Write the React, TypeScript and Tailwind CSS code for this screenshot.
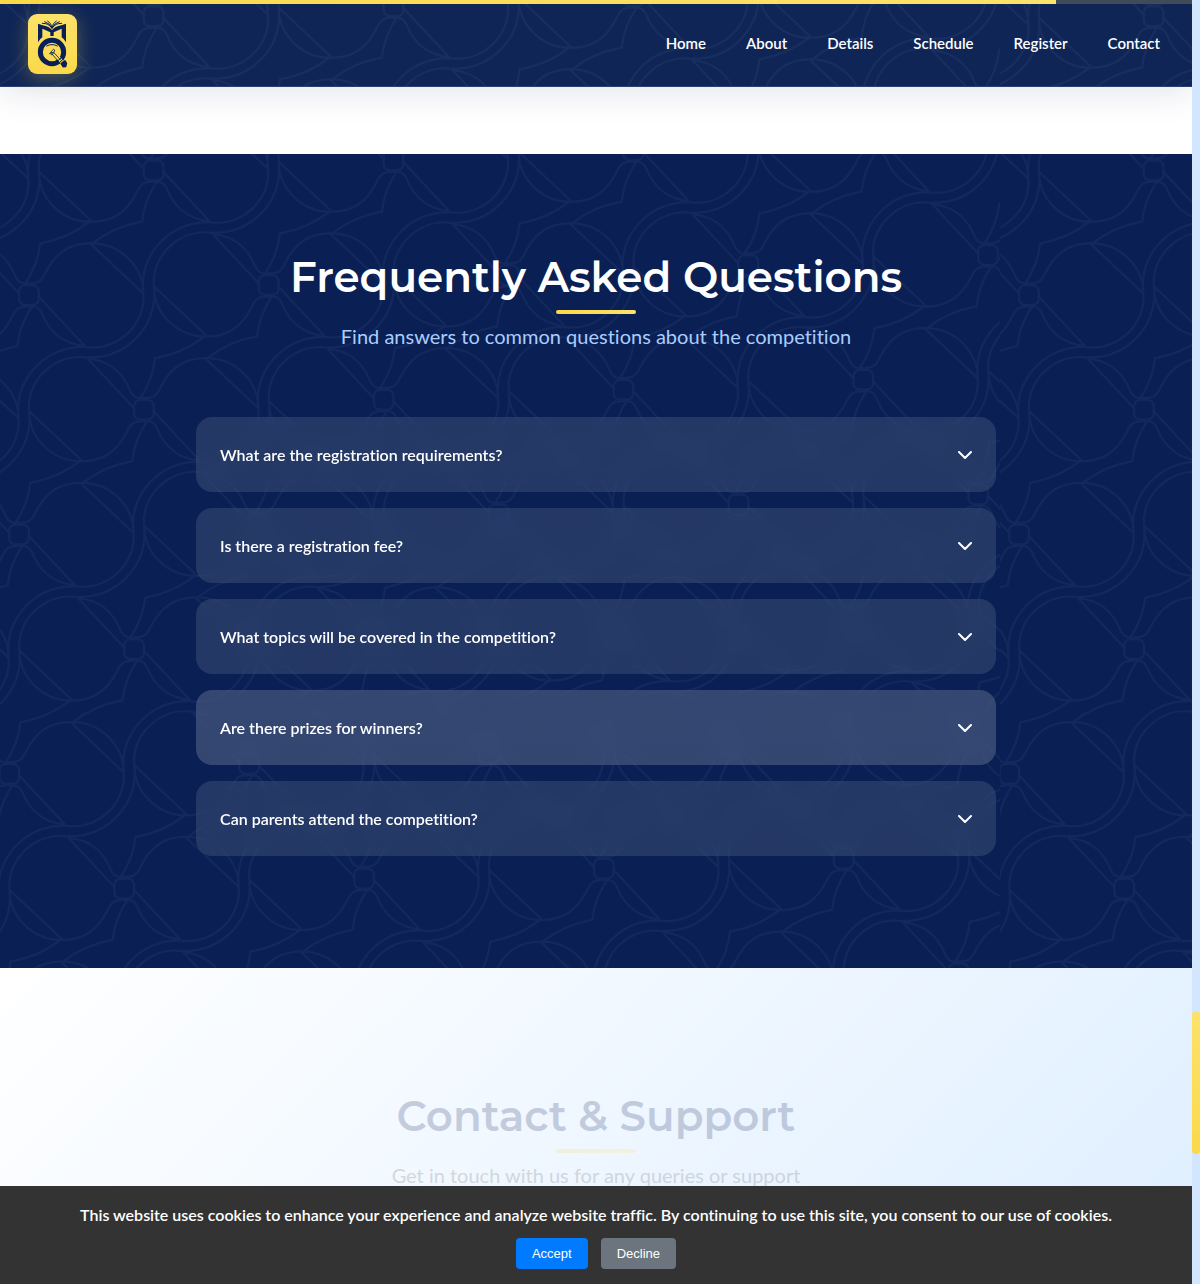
import React, { useId } from "react";

const NAV = ["Home", "About", "Details", "Schedule", "Register", "Contact"];

const QUESTIONS = [
  { text: "What are the registration requirements?", active: false },
  { text: "Is there a registration fee?", active: false },
  { text: "What topics will be covered in the competition?", active: false },
  { text: "Are there prizes for winners?", active: true },
  { text: "Can parents attend the competition?", active: false },
];

/* Knot centres of the woven lattice inside one 1000px wide tile. */
const KNOTS: Array<[number, number]> = [];
for (let i = -10; i <= 14; i++) {
  for (let j = -10; j <= 14; j++) {
    const x = 153.5 + i * 115 - j * 124.8;
    const y = 16.2 + i * 114.7 + j * 124.7;
    if (x > -220 && x < 1220 && y > -150 && y < 1200) KNOTS.push([x, y]);
  }
}

const HALF_MOTIF =
  "M28 3L168 153M187 -152L344 -4M-13 -30Q28 -90 34 -154Q120 -170 182 -219" +
  "M-168 -153C-90 -145 -58 -100 -40 -56C-28 -28 -5 -35 6 -35C28 -35 38 -40 50 -66C80 -125 120 -155 187 -155C280 -155 344 -80 344 -4" +
  "M170 156C265 170 350 90 344 0C330 -120 420 -220 544 -218";

function PatternLayer({ stroke }: { stroke: string }) {
  const id = useId();
  return (
    <svg aria-hidden="true" className="pointer-events-none absolute inset-0 h-full w-full">
      <defs>
        <g id={`${id}m`} transform="scale(0.3333)">
          <rect x="-29" y="-29" width="59" height="59" rx="18" />
          <path d={HALF_MOTIF} />
          <path d={HALF_MOTIF} transform="rotate(180)" />
        </g>
        <pattern id={`${id}p`} width="1000" height="1000" patternUnits="userSpaceOnUse">
          <g fill="none" stroke={stroke} strokeWidth="6">
            {KNOTS.map(([x, y]) => (
              <use key={`${x},${y}`} href={`#${id}m`} x={x} y={y} />
            ))}
          </g>
        </pattern>
      </defs>
      <rect width="100%" height="100%" fill={`url(#${id}p)`} />
    </svg>
  );
}

function Logo() {
  return (
    <svg viewBox="84 42 147 180" className="h-full w-full" role="img" aria-label="Quiz logo">
      <path fill="#0a2054" d="M114 71L128 76Q148 80 156 90Q164 80 184 76L198 71V127Q193 117 185 112V86L161 97V108H151V97L127 86V112Q119 117 114 127Z" />
      <circle cx="156" cy="156" r="35" fill="none" stroke="#0a2054" strokeWidth="15" />
      <path d="M168 166L186 186" stroke="#fbdc53" strokeWidth="11" />
      <g fill="none" stroke="#0a2054" strokeLinecap="round">
        <path strokeWidth="3" d="M127 70Q146 69 155 84M134 65Q149 69 156 84M143 63Q154 69 156 82M185 70Q166 69 157 84M178 65Q163 69 156 84M169 63Q158 69 156 82" />
        <path strokeWidth="3" d="M140 138Q156 129 172 138" />
        <path strokeWidth="2.5" d="M161 157L182 180M156 162L177 186M148 161q4-6 10-3t-3 7q-7-3 0-12t9-3-8 10" />
        <path strokeWidth="3" d="M174 182l9-8M179 187l9-8" />
        <path strokeWidth="5" strokeLinejoin="round" fill="#0a2054" d="M184 191l11-8 4 7-2 9-7 1z" />
      </g>
    </svg>
  );
}

function Chevron() {
  return (
    <svg width="14" height="8" viewBox="0 0 14 8" fill="none" stroke="currentColor" strokeWidth="2" strokeLinecap="round" strokeLinejoin="round" aria-hidden="true">
      <path d="M1 1l6 6 6-6" />
    </svg>
  );
}

function SectionTitle({ title, subtitle, titleClass, subtitleClass }: { title: string; subtitle: string; titleClass: string; subtitleClass: string }) {
  return (
    <div className="flex flex-col items-center text-center">
      <h2 className={`font-[Montserrat,Inter,sans-serif] text-[42px] leading-[54px] font-semibold ${titleClass}`}>{title}</h2>
      <div className="mt-1.5 h-1 w-20 rounded-sm bg-linear-to-r from-[#fad948] to-[#fde26b]" />
      <p className={`mt-1.5 text-xl leading-8 ${subtitleClass}`}>{subtitle}</p>
    </div>
  );
}

export default function App() {
  return (
    <div className="flex h-screen bg-white font-[Lato,sans-serif] [font-variant-ligatures:none]">
      <div className="flex min-w-0 flex-1 flex-col overflow-hidden">
        <header className="relative z-10 flex items-center justify-between border-b border-[#2a3f70] bg-[#0f2556] pt-3.5 pr-8 pb-3 pl-7 shadow-[0_8px_32px_rgba(10,32,84,0.1)]">
          <PatternLayer stroke="#182e5f" />
          <div className="absolute inset-x-0 top-0 h-1 bg-[#404b58]">
            <div className="h-full w-[88.6%] bg-linear-to-r from-[#fad948] to-[#fde26b]" />
          </div>
          <a href="#home" className="relative h-15 w-[49px] rounded-[9px] bg-linear-to-t from-[#fad948] to-[#fde26b] shadow-[0_4px_20px_rgba(250,217,72,0.3)]">
            <Logo />
          </a>
          <nav className="relative flex gap-10 pb-0.5 text-[15px] font-semibold text-white">
            {NAV.map((item) => (
              <a key={item} href={`#${item.toLowerCase()}`}>{item}</a>
            ))}
          </nav>
        </header>

        <main className="min-h-0 flex-1 overflow-hidden">
          <div className="h-[67px] bg-white" />
          <section className="relative bg-[#0a2054] px-6 pt-24 pb-28">
            <PatternLayer stroke="#13295d" />
            <div className="relative">
              <SectionTitle
                title="Frequently Asked Questions"
                subtitle="Find answers to common questions about the competition"
                titleClass="text-white"
                subtitleClass="text-[#a9cdff]"
              />
              <div className="mx-auto mt-[65px] flex max-w-[800px] flex-col gap-4">
                {QUESTIONS.map((q) => (
                  <button
                    key={q.text}
                    type="button"
                    aria-expanded="false"
                    className={`flex h-[75px] items-center justify-between rounded-2xl px-6 text-left text-base font-semibold text-white backdrop-blur-[10px] ${q.active ? "bg-[#c8d2dc]/22" : "bg-white/11"}`}
                  >
                    {q.text}
                    <Chevron />
                  </button>
                ))}
              </div>
            </div>
          </section>
          <section className="h-[1000px] bg-linear-[135deg,#ffffff,#d0e7ff] px-6 pt-[121px]">
            <div className="opacity-20">
              <SectionTitle
                title="Contact & Support"
                subtitle="Get in touch with us for any queries or support"
                titleClass="text-[#0a2054]"
                subtitleClass="text-[#555555]"
              />
            </div>
          </section>
        </main>

        <aside aria-label="Cookie consent" className="flex flex-col items-center bg-[#333333] px-4 pt-4 pb-[15px]">
          <p className="text-base leading-[26px] font-semibold text-white">
            This website uses cookies to enhance your experience and analyze website traffic. By continuing to use this site, you consent to our use of cookies.
          </p>
          <div className="mt-2.5 flex gap-[13px] font-['Liberation_Sans',Arial,sans-serif] text-[13px] leading-[15px] text-white">
            <button type="button" className="rounded bg-[#007bff] px-4 py-2">Accept</button>
            <button type="button" className="rounded bg-[#6c757d] px-4 py-2">Decline</button>
          </div>
        </aside>
      </div>

      <div aria-hidden="true" className="flex w-2 flex-col bg-[#d2e7ff]">
        <div className="grow-[1011]" />
        <div className="grow-[143] rounded bg-linear-to-b from-[#fde26b] to-[#fad948]" />
        <div className="grow-[130]" />
      </div>
    </div>
  );
}
